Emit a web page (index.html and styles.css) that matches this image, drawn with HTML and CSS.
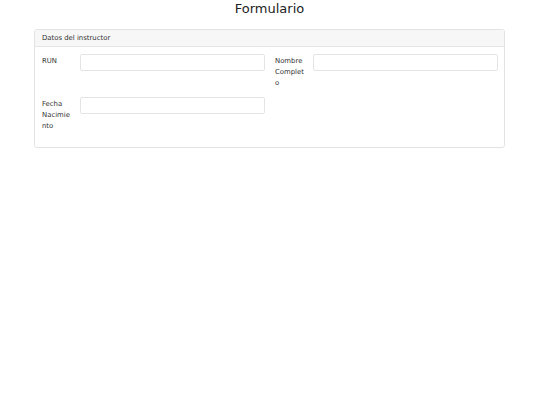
FILE: index.html
```html
<!DOCTYPE html>
<html lang="es">
<head>
<meta charset="utf-8">
<title>Formulario</title>
<link rel="stylesheet" href="styles.css">
</head>
<body>
<main class="page">
  <h1 class="title">Formulario</h1>
  <section class="card">
    <div class="card-header">Datos del instructor</div>
    <div class="card-body">
      <div class="field">
        <label class="field-label" for="run">RUN</label>
        <input class="field-input" id="run" type="text">
      </div>
      <div class="field">
        <label class="field-label" for="nombre">Nombre Completo</label>
        <input class="field-input" id="nombre" type="text">
      </div>
      <div class="field">
        <label class="field-label" for="fecha">Fecha Nacimiento</label>
        <input class="field-input" id="fecha" type="text">
      </div>
    </div>
  </section>
</main>
</body>
</html>
```
FILE: styles.css
```css
html, body {
  margin: 0;
  padding: 0;
  background: #ffffff;
}

body {
  font-family: "DejaVu Sans", sans-serif;
  color: #212529;
}

.page {
  padding: 1px 35px 0 34px;
}

.title {
  margin: 0;
  font-size: 13px;
  font-weight: normal;
  line-height: normal;
  text-align: center;
  color: #222;
}

.card {
  margin-top: 13px;
  border: 1px solid #e3e3e3;
  border-radius: 3px;
  overflow: hidden;
}

.card-header {
  background: #f7f7f7;
  border-bottom: 1px solid #e6e6e6;
  padding: 3px 7px;
  font-size: 6.9px;
  line-height: 10px;
  color: #333;
}

.card-body {
  display: grid;
  grid-template-columns: 1fr 1fr;
  column-gap: 10px;
  row-gap: 8px;
  padding: 7px 6px 15px 7px;
}

.field {
  display: grid;
  grid-template-columns: 38px 1fr;
  align-items: start;
}

.field-label {
  width: 30px;
  padding-top: 2px;
  font-size: 6.9px;
  line-height: 11px;
  color: #333;
  overflow-wrap: anywhere;
}

.field-input {
  box-sizing: border-box;
  width: 100%;
  height: 17px;
  margin: 0;
  padding: 0 4px;
  border: 1px solid #e4e4e4;
  border-radius: 2px;
  background: #fff;
  font: inherit;
  font-size: 6.9px;
}
```
